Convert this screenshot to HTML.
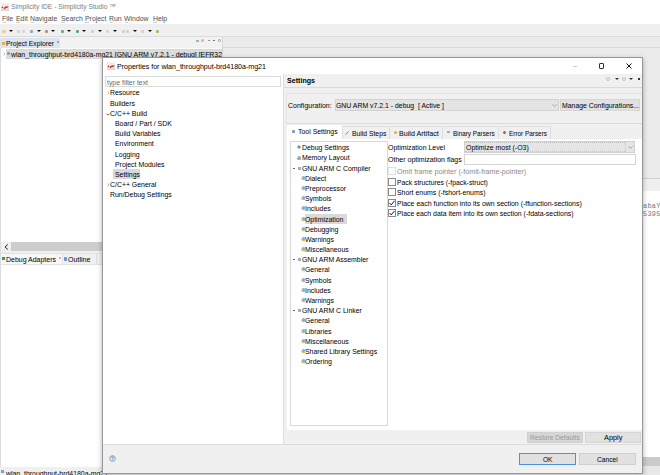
<!DOCTYPE html>
<html><head><meta charset="utf-8">
<style>
*{margin:0;padding:0;box-sizing:border-box}
html,body{width:660px;height:475px;overflow:hidden;background:#fff;position:relative;font-family:"Liberation Sans",sans-serif;font-size:7.5px;color:#000}
div{position:absolute}
.t{white-space:nowrap;line-height:11.2px;height:11px;font-size:7.5px;transform-origin:0 0;color:#000}
</style></head><body>
<div style="left:0px;top:0px;width:660px;height:13px;background:#fff;"></div>
<svg style="position:absolute;left:1px;top:3px" width="8" height="8"><defs><linearGradient id="lg1" x1="0" y1="0" x2="0" y2="1"><stop offset="0" stop-color="#f2f2f2"/><stop offset="1" stop-color="#d6d6d6"/></linearGradient></defs><rect x="0" y="0" width="8" height="8" fill="url(#lg1)"/><rect x="0" y="2.5" width="8" height="1" fill="#e8f6f6"/><circle cx="1.4" cy="4.2" r="0.8" fill="#e01818"/><path d="M2.8 5.6Q3 3.6 4.6 3.4L7.6 3.2Q7.4 4.6 6.2 4.8L4.6 5Q4.2 5.8 3.4 6.2Z" fill="#e02020"/></svg>
<div class="t" style="left:11px;top:1px;transform:scaleX(0.8934);color:#808080">Simplicity IDE - Simplicity Studio ™</div>
<div class="t" style="left:2px;top:13px;transform:scaleX(0.9200);color:#505050">File</div>
<div style="left:2.5px;top:22px;width:3.5px;height:0.6px;background:#cfcfcf;"></div>
<div class="t" style="left:15.5px;top:13px;transform:scaleX(0.9200);color:#505050">Edit</div>
<div style="left:16.0px;top:22px;width:3.5px;height:0.6px;background:#cfcfcf;"></div>
<div class="t" style="left:30px;top:13px;transform:scaleX(0.9200);color:#505050">Navigate</div>
<div style="left:30.5px;top:22px;width:3.5px;height:0.6px;background:#cfcfcf;"></div>
<div class="t" style="left:60.8px;top:13px;transform:scaleX(0.9200);color:#505050">Search</div>
<div style="left:61.3px;top:22px;width:3.5px;height:0.6px;background:#cfcfcf;"></div>
<div class="t" style="left:84.5px;top:13px;transform:scaleX(0.9200);color:#505050">Project</div>
<div style="left:85.0px;top:22px;width:3.5px;height:0.6px;background:#cfcfcf;"></div>
<div class="t" style="left:109px;top:13px;transform:scaleX(0.9200);color:#505050">Run</div>
<div style="left:109.5px;top:22px;width:3.5px;height:0.6px;background:#cfcfcf;"></div>
<div class="t" style="left:124px;top:13px;transform:scaleX(0.9200);color:#505050">Window</div>
<div style="left:124.5px;top:22px;width:3.5px;height:0.6px;background:#cfcfcf;"></div>
<div class="t" style="left:152.5px;top:13px;transform:scaleX(0.9200);color:#505050">Help</div>
<div style="left:153.0px;top:22px;width:3.5px;height:0.6px;background:#cfcfcf;"></div>
<div style="left:0px;top:24px;width:660px;height:13px;background:#f0f0f0;"></div>
<div style="left:0px;top:36px;width:660px;height:1px;background:#dcdcdc;"></div>
<div style="left:2px;top:29.5px;width:4px;height:3px;background:#e8d090;border-radius:1px"></div>
<div style="left:17px;top:29.5px;width:3px;height:3px;background:#d4d4d4;border-radius:1px"></div>
<div style="left:21.5px;top:29.5px;width:3px;height:3px;background:#d4d4d4;border-radius:1px"></div>
<div style="left:29.5px;top:29.5px;width:3px;height:3px;background:#90a8c8;border-radius:1px"></div>
<div style="left:44.5px;top:29.5px;width:3px;height:3px;background:#c89060;border-radius:1px"></div>
<div style="left:60.5px;top:29.5px;width:3px;height:3px;background:#70a890;border-radius:1px"></div>
<div style="left:75.5px;top:29.5px;width:3px;height:3px;background:#60a870;border-radius:1px"></div>
<div style="left:91px;top:29.5px;width:3px;height:3px;background:#d0d0d0;border-radius:1px"></div>
<div style="left:106px;top:29.5px;width:3px;height:3px;background:#d8d8d8;border-radius:1px"></div>
<div style="left:121.5px;top:29.5px;width:3px;height:3px;background:#d0d4d8;border-radius:1px"></div>
<div style="left:126px;top:29.5px;width:3px;height:3px;background:#d0d4d8;border-radius:1px"></div>
<div style="left:141px;top:29.5px;width:3px;height:3px;background:#d0d4d8;border-radius:1px"></div>
<div style="left:156px;top:29.5px;width:3px;height:3px;background:#a0c070;border-radius:1px"></div>
<div style="left:9.25px;top:30px;width:0;height:0;border-left:2px solid transparent;border-right:2px solid transparent;border-top:2.5px solid #111"></div>
<div style="left:36.75px;top:30px;width:0;height:0;border-left:2px solid transparent;border-right:2px solid transparent;border-top:2.5px solid #111"></div>
<div style="left:51.25px;top:30px;width:0;height:0;border-left:2px solid transparent;border-right:2px solid transparent;border-top:2.5px solid #111"></div>
<div style="left:67.25px;top:30px;width:0;height:0;border-left:2px solid transparent;border-right:2px solid transparent;border-top:2.5px solid #111"></div>
<div style="left:82.25px;top:30px;width:0;height:0;border-left:2px solid transparent;border-right:2px solid transparent;border-top:2.5px solid #111"></div>
<div style="left:98px;top:30px;width:0;height:0;border-left:2px solid transparent;border-right:2px solid transparent;border-top:2.5px solid #111"></div>
<div style="left:113px;top:30px;width:0;height:0;border-left:2px solid transparent;border-right:2px solid transparent;border-top:2.5px solid #111"></div>
<div style="left:133px;top:30px;width:0;height:0;border-left:2px solid transparent;border-right:2px solid transparent;border-top:2.5px solid #111"></div>
<div style="left:148px;top:30px;width:0;height:0;border-left:2px solid transparent;border-right:2px solid transparent;border-top:2.5px solid #111"></div>
<div style="left:0px;top:37px;width:223px;height:11px;background:#f2f2f2;"></div>
<div style="left:0px;top:38px;width:60px;height:10px;background:#dce5ef;border-radius:2px 2px 0 0"></div>
<div style="left:2px;top:41.5px;width:3px;height:3px;background:#e0b040;"></div>
<div class="t" style="left:6px;top:38px;transform:scaleX(0.8996);">Project Explorer</div>
<div style="left:56.5px;top:40.5px;width:2px;height:2px;border:0.5px solid #aaa"></div>
<div style="left:196px;top:39.5px;width:3px;height:2.5px;background:#9ab4d8;"></div>
<div style="left:201px;top:39px;width:3px;height:3px;background:#e8b870;border-radius:50%"></div>
<div style="left:208px;top:40px;width:2px;height:1px;background:#999;"></div>
<div style="left:212.5px;top:40px;width:2.5px;height:1px;background:#777;"></div>
<div style="left:218px;top:39px;width:3px;height:3px;border:0.7px solid #999;border-radius:50%"></div>
<div style="left:222px;top:37px;width:1px;height:20px;background:#d8d8d8;"></div>
<div style="left:223px;top:37px;width:437px;height:141px;background:#ebebeb;"></div>
<div style="left:223px;top:47px;width:437px;height:1px;background:#d8d8d8;"></div>
<div style="left:0px;top:48px;width:222px;height:11px;background:#fff;"></div>
<div style="left:6px;top:49px;width:216px;height:10px;background:#dcdcdc;border-top:1px solid #d2d9e2"></div>
<svg style="position:absolute;left:2.5px;top:51.5px" width="3" height="4"><path d="M0.5 0.5L2 2L0.5 3.5" stroke="#999" fill="none" stroke-width="0.7"/></svg>
<div style="left:6.5px;top:52px;width:3px;height:3px;background:#7aa2d4;border-radius:1px"></div>
<div class="t" style="left:11px;top:49px;transform:scaleX(0.9185);">wlan_throughput-brd4180a-mg21 [GNU ARM v7.2.1 - debug] [EFR32</div>
<div style="left:222px;top:48px;width:1px;height:9px;background:#c8d4e4;"></div>
<div style="left:0px;top:48px;width:1px;height:419px;background:#dcdcdc;"></div>
<div style="left:1px;top:242px;width:101px;height:9px;background:#cdcdcd;"></div>
<div style="left:1px;top:242px;width:10px;height:9px;background:#f0f0f0;"></div>
<svg style="position:absolute;left:3.5px;top:243.5px" width="5" height="6"><path d="M3.8 0.5L1 3L3.8 5.5" stroke="#222" fill="none" stroke-width="1"/></svg>
<div style="left:1px;top:251px;width:101px;height:2px;background:#f0f0f0;"></div>
<div style="left:1px;top:253px;width:101px;height:1px;background:#e2e2e2;"></div>
<div style="left:1px;top:254px;width:101px;height:10px;background:#f0f0f0;"></div>
<div style="left:1px;top:254px;width:61px;height:10px;background:#f7f7f7;"></div>
<div style="left:2px;top:256.5px;width:3px;height:3px;background:#3aa050;"></div>
<div class="t" style="left:6px;top:254px;transform:scaleX(0.9294);">Debug Adapters</div>
<div style="left:58.5px;top:257px;width:2px;height:2px;border:0.5px solid #bbb"></div>
<div style="left:62px;top:254px;width:1px;height:10px;background:#e4e4e4;"></div>
<div style="left:63.5px;top:257px;width:3px;height:4px;background:#5a9ad8;border-radius:1px"></div>
<div class="t" style="left:68px;top:254px;transform:scaleX(0.9467);">Outline</div>
<div style="left:96px;top:254px;width:1px;height:10px;background:#dcdcdc;"></div>
<div style="left:1px;top:264px;width:101px;height:1px;background:#e2e2e2;"></div>
<div style="left:0px;top:467px;width:102px;height:8px;background:#f0f0f0;"></div>
<div style="left:1px;top:470px;width:3px;height:3px;background:#7aa0d0;"></div>
<div class="t" style="left:6px;top:468px;transform:scaleX(0.9200);">wlan_throughput-brd4180a-mg21</div>
<div style="left:643px;top:178px;width:17px;height:1px;background:#d0d0d0;"></div>
<div style="left:643px;top:179px;width:17px;height:12px;background:#efefef;"></div>
<div style="left:643px;top:191px;width:17px;height:266px;background:#fff;"></div>
<div class="t" style="left:643px;top:201px;transform:scaleX(0.9200);font-family:'Liberation Mono';color:#777;letter-spacing:0.3px">abaY</div>
<div class="t" style="left:643px;top:209px;transform:scaleX(0.9200);font-family:'Liberation Mono';color:#777;letter-spacing:0.3px">5395</div>
<div style="left:643px;top:457px;width:17px;height:9px;background:#cbcbcb;"></div>
<div style="left:643px;top:466px;width:17px;height:9px;background:#e8e8e8;"></div>
<div style="left:102px;top:57px;width:541px;height:417px;background:#f0f0f0;border:1px solid #979797;box-shadow:0 2px 5px rgba(0,0,0,0.3)"></div>
<div style="left:103px;top:58px;width:539px;height:16px;background:#fff;"></div>
<svg style="position:absolute;left:107px;top:62px" width="8" height="8"><defs><linearGradient id="lg107" x1="0" y1="0" x2="0" y2="1"><stop offset="0" stop-color="#f2f2f2"/><stop offset="1" stop-color="#d6d6d6"/></linearGradient></defs><rect x="0" y="0" width="8" height="8" fill="url(#lg107)"/><rect x="0" y="2.5" width="8" height="1" fill="#e8f6f6"/><circle cx="1.4" cy="4.2" r="0.8" fill="#e01818"/><path d="M2.8 5.6Q3 3.6 4.6 3.4L7.6 3.2Q7.4 4.6 6.2 4.8L4.6 5Q4.2 5.8 3.4 6.2Z" fill="#e02020"/></svg>
<div class="t" style="left:117px;top:61px;transform:scaleX(0.9429);">Properties for wlan_throughput-brd4180a-mg21</div>
<div style="left:573px;top:66px;width:4px;height:1px;background:#cfcfcf;"></div>
<div style="left:599px;top:63px;width:5px;height:6px;border:1px solid #333;border-radius:1px"></div>
<svg style="position:absolute;left:626px;top:63px" width="6" height="6"><path d="M0.5 0.5L5.5 5.5M5.5 0.5L0.5 5.5" stroke="#111" stroke-width="1"/></svg>
<div style="left:103px;top:74px;width:180px;height:370px;background:#fff;"></div>
<div style="left:105px;top:76px;width:176px;height:11px;background:#fff;border:1px solid #dcdcdc"></div>
<div class="t" style="left:107px;top:77px;transform:scaleX(0.9200);color:#6d6d6d">type filter text</div>
<svg style="position:absolute;left:106.5px;top:91px" width="3" height="4"><path d="M0.6 0.5L2 2L0.6 3.5" stroke="#999" fill="none" stroke-width="0.7"/></svg>
<div class="t" style="left:110px;top:87px;transform:scaleX(0.9200);">Resource</div>
<div class="t" style="left:110px;top:98px;transform:scaleX(0.9200);">Builders</div>
<svg style="position:absolute;left:106px;top:112.5px" width="4" height="3"><path d="M0.5 0.6L2 2.2L3.5 0.6" stroke="#444" fill="none" stroke-width="0.8"/></svg>
<div class="t" style="left:110px;top:108px;transform:scaleX(0.9200);">C/C++ Build</div>
<div class="t" style="left:115px;top:118px;transform:scaleX(0.9200);">Board / Part / SDK</div>
<div class="t" style="left:115px;top:128px;transform:scaleX(0.9200);">Build Variables</div>
<div class="t" style="left:115px;top:138px;transform:scaleX(0.9200);">Environment</div>
<div class="t" style="left:115px;top:149px;transform:scaleX(0.9200);">Logging</div>
<div class="t" style="left:115px;top:159px;transform:scaleX(0.9200);">Project Modules</div>
<div style="left:113px;top:169px;width:27px;height:10px;background:#d9d9d9;"></div>
<div class="t" style="left:115px;top:169px;transform:scaleX(0.9200);">Settings</div>
<svg style="position:absolute;left:106.5px;top:183px" width="3" height="4"><path d="M0.6 0.5L2 2L0.6 3.5" stroke="#999" fill="none" stroke-width="0.7"/></svg>
<div class="t" style="left:110px;top:179px;transform:scaleX(0.9200);">C/C++ General</div>
<div class="t" style="left:110px;top:189px;transform:scaleX(0.9200);">Run/Debug Settings</div>
<div style="left:283px;top:74px;width:1px;height:370px;background:#dedede;"></div>
<div class="t" style="left:286.5px;top:75px;transform:scaleX(0.9461);font-weight:bold">Settings</div>
<div style="left:284px;top:87px;width:358px;height:1px;background:#dadada;"></div>
<div style="left:606px;top:76.5px;width:4px;height:4px;border:0.7px solid #c4c4c4;border-radius:50%"></div>
<div style="left:614.5px;top:77.5px;width:0;height:0;border-left:2.5px solid transparent;border-right:2.5px solid transparent;border-top:2.5px solid #333"></div>
<div style="left:622px;top:76.5px;width:4px;height:4px;border:0.7px solid #c4c4c4;border-radius:50%"></div>
<div style="left:629px;top:77.5px;width:0;height:0;border-left:2.5px solid transparent;border-right:2.5px solid transparent;border-top:2.5px solid #333"></div>
<div style="left:637.5px;top:77.5px;width:2px;height:2px;background:#334;"></div>
<div style="left:286px;top:93px;width:356px;height:31px;border-top:1px solid #e4e4e4;border-bottom:1px solid #dcdcdc;border-left:1px solid #e4e4e4"></div>
<div class="t" style="left:288px;top:100px;transform:scaleX(0.9357);">Configuration:</div>
<div style="left:335px;top:99px;width:224px;height:12px;background:#e4e4e4;border:1px solid #d2d2d2"></div>
<div class="t" style="left:336px;top:100px;transform:scaleX(0.9187);">GNU ARM v7.2.1 - debug&nbsp; [ Active ]</div>
<svg style="position:absolute;left:552px;top:104px" width="5" height="3"><path d="M0.4 0.4L2.5 2.4L4.6 0.4" stroke="#888" fill="none" stroke-width="0.7"/></svg>
<div style="left:560px;top:99px;width:80px;height:12px;background:#e1e1e1;border:1px solid #d6d6d6"></div>
<div class="t" style="left:561.6px;top:100px;transform:scaleX(0.9187);">Manage Configurations...</div>
<div style="left:287px;top:125px;width:55px;height:14px;background:#fff;"></div>
<div style="left:342px;top:126px;width:209px;height:13px;background:#f0f0f0;border-top:1px solid #e0e0e0"></div>
<div style="left:342px;top:126px;width:1px;height:13px;background:#dedede;"></div>
<div style="left:389px;top:126px;width:1px;height:13px;background:#dedede;"></div>
<div style="left:442px;top:126px;width:1px;height:13px;background:#dedede;"></div>
<div style="left:498px;top:126px;width:1px;height:13px;background:#dedede;"></div>
<div style="left:550px;top:126px;width:1px;height:13px;background:#dedede;"></div>
<div style="left:291.5px;top:130px;width:3px;height:3px;background:#7a9cc0;border-radius:1px"></div>
<div class="t" style="left:298px;top:126px;transform:scaleX(0.9243);">Tool Settings</div>
<svg style="position:absolute;left:344.5px;top:130.5px" width="4" height="4"><path d="M0.5 3.5L3.5 0.5" stroke="#5a7ca8" stroke-width="0.9"/></svg>
<div class="t" style="left:351.7px;top:128px;transform:scaleX(0.9037);">Build Steps</div>
<div style="left:394px;top:131px;width:3px;height:3px;background:#f0b030;border-radius:50%"></div>
<div class="t" style="left:399.3px;top:128px;transform:scaleX(0.9523);">Build Artifact</div>
<div style="left:447px;top:131px;width:3px;height:2px;background:#9ab0c4;"></div>
<div class="t" style="left:453.3px;top:128px;transform:scaleX(0.8478);">Binary Parsers</div>
<div style="left:503px;top:131px;width:3px;height:3px;background:#e04848;border-radius:50%"></div>
<div class="t" style="left:509.3px;top:128px;transform:scaleX(0.8521);">Error Parsers</div>
<div style="left:287px;top:139px;width:355px;height:291px;background:#fff;"></div>
<div style="left:290px;top:141px;width:98px;height:285px;border:1px solid #d8d8d8"></div>
<svg style="position:absolute;left:297px;top:145px" width="4" height="4"><path d="M2 0L4 2L2 4L0 2Z" fill="#5a9e7e"/></svg>
<div class="t" style="left:301.7px;top:142px;transform:scaleX(0.9200);">Debug Settings</div>
<svg style="position:absolute;left:297px;top:156px" width="4" height="4"><rect x="0" y="2" width="4" height="2" fill="#eeb040"/><circle cx="2.2" cy="1.6" r="1.6" fill="#7aa8d8"/></svg>
<div class="t" style="left:301.7px;top:152px;transform:scaleX(0.9200);">Memory Layout</div>
<div style="left:293px;top:168px;width:2px;height:1px;background:#666;"></div>
<div style="left:297.5px;top:166.5px;width:3px;height:3px;background:#9ab0c8;"></div>
<div class="t" style="left:301.7px;top:163px;transform:scaleX(0.9200);">GNU ARM C Compiler</div>
<svg style="position:absolute;left:301px;top:176px" width="4" height="4"><path d="M0 1.5L1 4L4 4L4 2.5Z" fill="#eeb44c"/><circle cx="2.5" cy="1.6" r="1.6" fill="#86b2dc"/></svg>
<div class="t" style="left:305.4px;top:173px;transform:scaleX(0.9200);">Dialect</div>
<svg style="position:absolute;left:301px;top:186px" width="4" height="4"><path d="M0 1.5L1 4L4 4L4 2.5Z" fill="#eeb44c"/><circle cx="2.5" cy="1.6" r="1.6" fill="#86b2dc"/></svg>
<div class="t" style="left:305.4px;top:183px;transform:scaleX(0.9200);">Preprocessor</div>
<svg style="position:absolute;left:301px;top:196px" width="4" height="4"><path d="M0 1.5L1 4L4 4L4 2.5Z" fill="#eeb44c"/><circle cx="2.5" cy="1.6" r="1.6" fill="#86b2dc"/></svg>
<div class="t" style="left:305.4px;top:193px;transform:scaleX(0.9200);">Symbols</div>
<svg style="position:absolute;left:301px;top:206px" width="4" height="4"><path d="M0 1.5L1 4L4 4L4 2.5Z" fill="#eeb44c"/><circle cx="2.5" cy="1.6" r="1.6" fill="#86b2dc"/></svg>
<div class="t" style="left:305.4px;top:203px;transform:scaleX(0.9200);">Includes</div>
<div style="left:305px;top:214px;width:42px;height:10px;background:#d9d9d9;"></div>
<svg style="position:absolute;left:301px;top:217px" width="4" height="4"><path d="M0 1.5L1 4L4 4L4 2.5Z" fill="#eeb44c"/><circle cx="2.5" cy="1.6" r="1.6" fill="#86b2dc"/></svg>
<div class="t" style="left:305.4px;top:214px;transform:scaleX(0.9200);">Optimization</div>
<svg style="position:absolute;left:301px;top:227px" width="4" height="4"><path d="M0 1.5L1 4L4 4L4 2.5Z" fill="#eeb44c"/><circle cx="2.5" cy="1.6" r="1.6" fill="#86b2dc"/></svg>
<div class="t" style="left:305.4px;top:224px;transform:scaleX(0.9200);">Debugging</div>
<svg style="position:absolute;left:301px;top:237px" width="4" height="4"><path d="M0 1.5L1 4L4 4L4 2.5Z" fill="#eeb44c"/><circle cx="2.5" cy="1.6" r="1.6" fill="#86b2dc"/></svg>
<div class="t" style="left:305.4px;top:234px;transform:scaleX(0.9200);">Warnings</div>
<svg style="position:absolute;left:301px;top:247px" width="4" height="4"><path d="M0 1.5L1 4L4 4L4 2.5Z" fill="#eeb44c"/><circle cx="2.5" cy="1.6" r="1.6" fill="#86b2dc"/></svg>
<div class="t" style="left:305.4px;top:244px;transform:scaleX(0.9200);">Miscellaneous</div>
<div style="left:293px;top:259px;width:2px;height:1px;background:#666;"></div>
<div style="left:297.5px;top:257.5px;width:3px;height:3px;background:#9ab0c8;"></div>
<div class="t" style="left:301.7px;top:254px;transform:scaleX(0.9200);">GNU ARM Assembler</div>
<svg style="position:absolute;left:301px;top:267px" width="4" height="4"><path d="M0 1.5L1 4L4 4L4 2.5Z" fill="#eeb44c"/><circle cx="2.5" cy="1.6" r="1.6" fill="#86b2dc"/></svg>
<div class="t" style="left:305.4px;top:264px;transform:scaleX(0.9200);">General</div>
<svg style="position:absolute;left:301px;top:278px" width="4" height="4"><path d="M0 1.5L1 4L4 4L4 2.5Z" fill="#eeb44c"/><circle cx="2.5" cy="1.6" r="1.6" fill="#86b2dc"/></svg>
<div class="t" style="left:305.4px;top:275px;transform:scaleX(0.9200);">Symbols</div>
<svg style="position:absolute;left:301px;top:288px" width="4" height="4"><path d="M0 1.5L1 4L4 4L4 2.5Z" fill="#eeb44c"/><circle cx="2.5" cy="1.6" r="1.6" fill="#86b2dc"/></svg>
<div class="t" style="left:305.4px;top:285px;transform:scaleX(0.9200);">Includes</div>
<svg style="position:absolute;left:301px;top:298px" width="4" height="4"><path d="M0 1.5L1 4L4 4L4 2.5Z" fill="#eeb44c"/><circle cx="2.5" cy="1.6" r="1.6" fill="#86b2dc"/></svg>
<div class="t" style="left:305.4px;top:295px;transform:scaleX(0.9200);">Warnings</div>
<div style="left:293px;top:310px;width:2px;height:1px;background:#666;"></div>
<div style="left:297.5px;top:308.5px;width:3px;height:3px;background:#9ab0c8;"></div>
<div class="t" style="left:301.7px;top:305px;transform:scaleX(0.9200);">GNU ARM C Linker</div>
<svg style="position:absolute;left:301px;top:318px" width="4" height="4"><path d="M0 1.5L1 4L4 4L4 2.5Z" fill="#eeb44c"/><circle cx="2.5" cy="1.6" r="1.6" fill="#86b2dc"/></svg>
<div class="t" style="left:305.4px;top:315px;transform:scaleX(0.9200);">General</div>
<svg style="position:absolute;left:301px;top:329px" width="4" height="4"><path d="M0 1.5L1 4L4 4L4 2.5Z" fill="#eeb44c"/><circle cx="2.5" cy="1.6" r="1.6" fill="#86b2dc"/></svg>
<div class="t" style="left:305.4px;top:326px;transform:scaleX(0.9200);">Libraries</div>
<svg style="position:absolute;left:301px;top:339px" width="4" height="4"><path d="M0 1.5L1 4L4 4L4 2.5Z" fill="#eeb44c"/><circle cx="2.5" cy="1.6" r="1.6" fill="#86b2dc"/></svg>
<div class="t" style="left:305.4px;top:336px;transform:scaleX(0.9200);">Miscellaneous</div>
<svg style="position:absolute;left:301px;top:349px" width="4" height="4"><path d="M0 1.5L1 4L4 4L4 2.5Z" fill="#eeb44c"/><circle cx="2.5" cy="1.6" r="1.6" fill="#86b2dc"/></svg>
<div class="t" style="left:305.4px;top:346px;transform:scaleX(0.9200);">Shared Library Settings</div>
<svg style="position:absolute;left:301px;top:359px" width="4" height="4"><path d="M0 1.5L1 4L4 4L4 2.5Z" fill="#eeb44c"/><circle cx="2.5" cy="1.6" r="1.6" fill="#86b2dc"/></svg>
<div class="t" style="left:305.4px;top:356px;transform:scaleX(0.9200);">Ordering</div>
<div class="t" style="left:388px;top:142px;transform:scaleX(0.9238);">Optimization Level</div>
<div style="left:464px;top:141px;width:171px;height:12px;background:#e5e5e5;border:1px solid #d0d0d0"></div>
<div style="left:465px;top:142px;width:160px;height:1px;border-top:1px dotted #bdbdbd"></div>
<div style="left:465px;top:151px;width:160px;height:1px;border-top:1px dotted #c4c4c4"></div>
<div style="left:625px;top:142px;width:1px;height:10px;background:#d4d4d4;"></div>
<svg style="position:absolute;left:628px;top:146px" width="5" height="3"><path d="M0.4 0.4L2.5 2.4L4.6 0.4" stroke="#888" fill="none" stroke-width="0.7"/></svg>
<div class="t" style="left:465.5px;top:142px;transform:scaleX(0.9302);">Optimize most (-O3)</div>
<div class="t" style="left:388px;top:154px;transform:scaleX(0.9366);">Other optimization flags</div>
<div style="left:464px;top:154px;width:172px;height:11px;background:#fff;border:1px solid #d4d4d4"></div>
<div style="left:388px;top:167px;width:8px;height:8px;background:#fff;border:1px solid #e0e0e0"></div>
<div class="t" style="left:397.4px;top:166px;transform:scaleX(0.9568);color:#8a8a8a">Omit frame pointer (-fomit-frame-pointer)</div>
<div style="left:388px;top:178px;width:8px;height:8px;background:#fff;border:1px solid #8a8a8a"></div>
<div class="t" style="left:397.4px;top:177px;transform:scaleX(0.9077);">Pack structures (-fpack-struct)</div>
<div style="left:388px;top:188px;width:8px;height:8px;background:#fff;border:1px solid #8a8a8a"></div>
<div class="t" style="left:397.4px;top:187px;transform:scaleX(0.9231);">Short enums (-fshort-enums)</div>
<div style="left:388px;top:199px;width:8px;height:8px;background:#fff;border:1px solid #8a8a8a"></div>
<svg style="position:absolute;left:389px;top:200px" width="6" height="6"><path d="M0.5 3L2.2 4.9L5.6 0.8" stroke="#1a1a1a" fill="none" stroke-width="1"/></svg>
<div class="t" style="left:397.4px;top:198px;transform:scaleX(0.9300);">Place each function into its own section (-ffunction-sections)</div>
<div style="left:388px;top:209px;width:8px;height:8px;background:#fff;border:1px solid #8a8a8a"></div>
<svg style="position:absolute;left:389px;top:210px" width="6" height="6"><path d="M0.5 3L2.2 4.9L5.6 0.8" stroke="#1a1a1a" fill="none" stroke-width="1"/></svg>
<div class="t" style="left:397.4px;top:208px;transform:scaleX(0.9204);">Place each data item into its own section (-fdata-sections)</div>
<div style="left:527px;top:432px;width:56px;height:11px;background:#d6d6d6;border:1px solid #d0d0d0"></div>
<div class="t" style="left:530.4px;top:432px;transform:scaleX(0.8915);color:#9a9a9a">Restore Defaults</div>
<div style="left:585px;top:432px;width:56px;height:11px;background:#e1e1e1;border:1px solid #d6d6d6"></div>
<div class="t" style="left:603.9px;top:432px;transform:scaleX(0.9805);">Apply</div>
<div style="left:103px;top:444px;width:539px;height:1px;background:#dcdcdc;"></div>
<svg style="position:absolute;left:109px;top:455px" width="7" height="7"><circle cx="3.5" cy="3.5" r="2.8" fill="#e4ebf5" stroke="#8098bc" stroke-width="0.9"/><path d="M2.5 2.8Q2.6 1.9 3.5 1.9Q4.5 2 4.4 2.8Q4.3 3.4 3.6 3.7L3.6 4.3M3.6 5L3.6 5.4" stroke="#4a6a9a" stroke-width="0.7" fill="none"/></svg>
<div style="left:519px;top:453px;width:57px;height:12px;background:#e1e1e1;border:1px solid #4a92e0"></div>
<div class="t" style="left:542.7px;top:454px;transform:scaleX(0.8761);">OK</div>
<div style="left:579px;top:453px;width:57px;height:12px;background:#e1e1e1;border:1px solid #d0d0d0"></div>
<div class="t" style="left:597.3px;top:454px;transform:scaleX(0.8904);">Cancel</div>
</body></html>
